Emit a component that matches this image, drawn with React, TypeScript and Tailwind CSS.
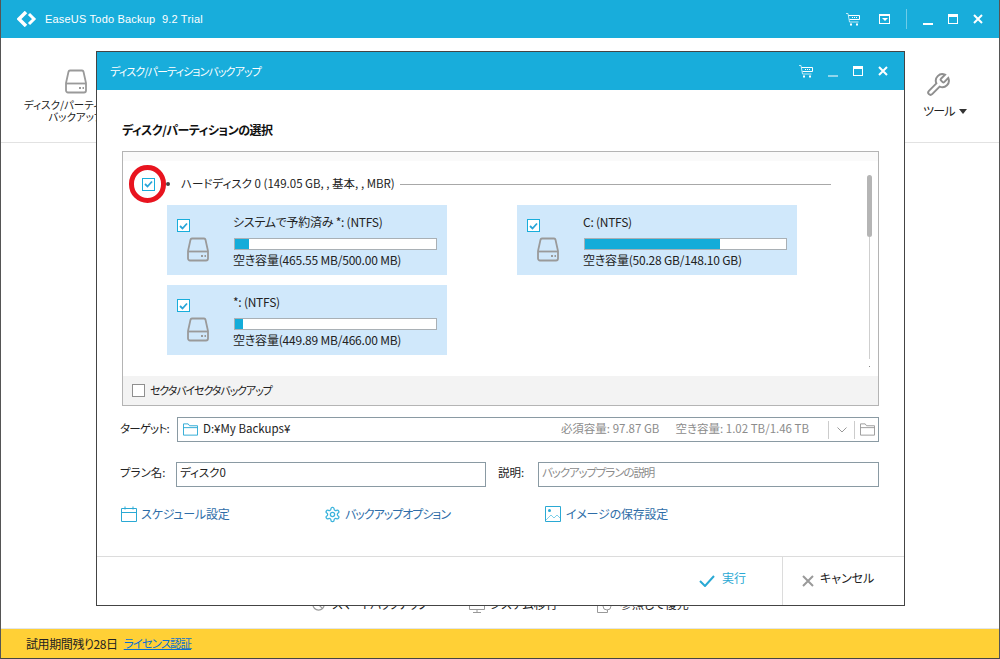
import React from "react"

const jp = "font-['Noto_Sans_CJK_JP','Noto_Sans',sans-serif] [font-feature-settings:'palt']"

function Drive({ className = "" }: { className?: string }) {
  return (
    <svg viewBox="0 0 22 25" fill="none" className={className}>
      <path d="M5 1.500h12a1.500 1.500 0 0 1 1.500 1.200L21 14v7.500a2 2 0 0 1-2 2H3a2 2 0 0 1-2-2V14L3.500 2.700A1.500 1.500 0 0 1 5 1.500z" stroke="#9a9a9a" strokeWidth="1.800" />
      <path d="M1 14.500h20" stroke="#9a9a9a" strokeWidth="1.800" />
      <path d="M14 19h2M17.500 19h1.500" stroke="#9a9a9a" strokeWidth="1.800" />
    </svg>
  )
}

function Cart() {
  return (
    <svg viewBox="0 0 14 13" fill="none" className="h-[13px] w-[14px]">
      <path d="M0 .5h2l1.500 8.500h9" stroke="#bfeaf6" strokeWidth="1" />
      <path d="M2.500 2.500h11v4h-10" stroke="#fff" strokeWidth="1" />
      <path d="M6 4.500h1M8 4.500h1M10 4.500h1" stroke="#fff" strokeWidth="1" />
      <path d="M4 10.500h2v2h-2zM10 10.500h2v2h-2z" fill="#fff" />
    </svg>
  )
}

function Minimize({ dim = false }: { dim?: boolean }) {
  return <div className={`mt-[10px] h-[2px] w-[10px] ${dim ? "bg-[#8fd6ec]" : "bg-white"}`} />
}

function Maximize() {
  return <div className="h-[10px] w-[10px] border border-t-[3px] border-white" />
}

function Close() {
  return (
    <svg viewBox="0 0 10 10" className="h-[10px] w-[10px]" fill="none">
      <path d="M1 1l8 8M9 1l-8 8" stroke="#fff" strokeWidth="2" />
    </svg>
  )
}

function Check({ className = "" }: { className?: string }) {
  return (
    <div className={`flex h-[13px] w-[13px] shrink-0 items-center justify-center border border-[#18addb] bg-white ${className}`}>
      <svg viewBox="0 0 9 8" className="h-[8px] w-[9px]" fill="none">
        <path d="M1 4l2.500 2.500L8 1.500" stroke="#2aa5d8" strokeWidth="1.800" />
      </svg>
    </div>
  )
}

function Partition({ name, free, pct }: { name: string; free: string; pct: number }) {
  return (
    <div className="flex h-[70px] w-[280px] bg-[#d0e8fb]">
      <div className="flex w-[67px] flex-col pl-[10px] pt-[14px]">
        <Check />
        <Drive className="ml-[10px] mt-[5px] h-[25px] w-[22px]" />
      </div>
      <div className="flex flex-col pt-[9px]">
        <div className="-ml-[1px] h-[16px] text-[12px] leading-[16px] tracking-[-0.25px] text-[#222]">{name}</div>
        <div className="mt-[8px] h-[12px] w-[203px] border border-[#a9b0b5] bg-white">
          <div className="h-full bg-[#14acd9]" style={{ width: `${pct}%` }} />
        </div>
        <div className="-ml-[1px] mt-[2px] h-[16px] whitespace-nowrap text-[12px] leading-[16px] tracking-[-0.2px] text-[#222]">{free}</div>
      </div>
    </div>
  )
}

export default function App() {
  return (
    <div className={`relative flex h-[659px] w-[1000px] flex-col overflow-hidden border-x border-b border-x-[#555] border-b-[#444] bg-white ${jp}`}>
      {/* main window */}
      <div className="flex h-[38px] shrink-0 items-center bg-[#18addb] pl-[16px] pr-[16px]">
        <svg viewBox="0 0 20 16" className="h-[16px] w-[20px]" fill="none">
          <path d="M9 1L2 8l7 7" stroke="#fff" strokeWidth="3.500" />
          <path d="M12 3l5 5-5 5" stroke="#fff" strokeWidth="3" />
        </svg>
        <span className="ml-[8px] font-['Liberation_Sans',sans-serif] text-[11px] tracking-[0.2px] text-white">EaseUS Todo Backup&nbsp; 9.2 Trial</span>
        <div className="ml-auto flex items-center">
          <Cart />
          <div className="ml-[19px] flex h-[10px] w-[11px] items-center justify-center border border-t-2 border-white">
            <div className="h-0 w-0 border-x-[3px] border-t-[3px] border-x-transparent border-t-white" />
          </div>
          <div className="ml-[16px] h-[20px] w-px bg-[#6fcce8]" />
          <div className="ml-[16px] flex items-center gap-[15px]">
            <Minimize />
            <Maximize />
            <Close />
          </div>
        </div>
      </div>

      <div className="flex h-[105px] shrink-0 items-start justify-between border-b border-[#e2e2e2]">
        <div className="flex w-[150px] flex-col items-center pt-[31px]">
          <Drive className="h-[25px] w-[22px]" />
          <div className="mt-[5px] whitespace-nowrap text-center text-[10.500px] leading-[12px] text-[#222]">ディスク/パーティション<br />バックアップ</div>
        </div>
        <div className="flex w-[90px] flex-col items-center pr-[18px] pt-[34px]">
          <svg viewBox="0 0 24 24" className="mr-[14px] h-[26px] w-[26px]" fill="none">
            <path d="M14.700 6.300a1 1 0 0 0 0 1.400l1.600 1.600a1 1 0 0 0 1.400 0l3.770-3.770a6 6 0 0 1-7.940 7.940l-6.910 6.910a2.120 2.120 0 0 1-3-3l6.910-6.910a6 6 0 0 1 7.940-7.940l-3.760 3.760z" stroke="#8f8f8f" strokeWidth="1.800" />
          </svg>
          <div className="mt-[4px] flex items-center gap-[4px] whitespace-nowrap text-[12px] tracking-[-0.8px] text-[#222]">
            ツール
            <div className="h-0 w-0 border-x-[4px] border-t-[5px] border-x-transparent border-t-[#333]" />
          </div>
        </div>
      </div>

      <div className="flex flex-1 items-end pb-[15px] pl-[311px] text-[12px] text-[#222]">
        <svg viewBox="0 0 16 16" className="h-[15px] w-[15px]" fill="none">
          <circle cx="7" cy="7" r="6" stroke="#999" strokeWidth="1.300" />
          <path d="M3 3l8 8" stroke="#999" strokeWidth="1.300" />
        </svg>
        <span className="ml-[5px] w-[137px] whitespace-nowrap tracking-[-1px]">スマートバックアップ</span>
        <svg viewBox="0 0 16 14" className="h-[14px] w-[16px]" fill="none">
          <path d="M.5.5h15v10H.5zM8 10.500v3M4 13.500h8" stroke="#999" strokeWidth="1" />
        </svg>
        <span className="ml-[5px] w-[107px]">システム移行</span>
        <svg viewBox="0 0 16 14" className="h-[14px] w-[16px]" fill="none">
          <path d="M.5.5h10v13H.5z" stroke="#999" strokeWidth="1" />
          <circle cx="10" cy="7" r="4" fill="#fff" stroke="#999" strokeWidth="1" />
        </svg>
        <span className="ml-[7px]">参照して復元</span>
      </div>

      <div className="flex h-[30px] shrink-0 items-center border-t border-[#e2e6ea] bg-[#ffd036] pl-[25px] text-[12px] text-[#222]">
        <span className="tracking-[-0.4px]">試用期間残り28日</span>
        <span className="ml-[6px] text-[11.500px] tracking-[-1px] text-[#0a6fd0] underline">ライセンス認証</span>
      </div>

      {/* dialog */}
      <div className="absolute left-[95px] top-[51px] flex h-[555px] w-[809px] flex-col border border-[#444] bg-white">
        <div className="flex h-[38px] shrink-0 items-center bg-[#18addb] pl-[13px] pr-[16px]">
          <span className="text-[11px] tracking-[-0.9px] text-white">ディスク/パーティションバックアップ</span>
          <div className="ml-auto flex items-center">
            <Cart />
            <div className="ml-[15px] flex items-center gap-[15px]">
              <Minimize dim />
              <Maximize />
              <Close />
            </div>
          </div>
        </div>

        <div className="flex flex-1 flex-col px-[25px]">
          <div className="mt-[30px] h-[20px] text-[12px] font-bold leading-[20px] tracking-[-0.5px] text-[#111]">ディスク/パーティションの選択</div>

          <div className="mt-[11px] flex h-[255px] w-[757px] flex-col border border-[#b4b4b4]">
            <div className="flex h-[9px] shrink-0 bg-[#fafafa]" />
            <div className="relative flex flex-1 flex-col">
              <div className="mt-[7px] flex h-[32px] items-center pl-[19px] pr-[47px]">
                <Check className="mr-[11px]" />
                <div className="mr-[11px] h-[4px] w-[4px] rounded-full bg-[#444]" />
                <span className="whitespace-nowrap text-[11.500px] text-[#222]">ハードディスク 0 (149.05 GB, , 基本, , MBR)</span>
                <div className="ml-[5px] h-px flex-1 bg-[#a8a8a8]" />
              </div>
              <div className="ml-[44px] mt-[5px] grid w-[630px] grid-cols-[280px_280px] gap-x-[70px] gap-y-[10px]">
                <Partition name="システムで予約済み *: (NTFS)" free="空き容量(465.55 MB/500.00 MB)" pct={7} />
                <Partition name="C: (NTFS)" free="空き容量(50.28 GB/148.10 GB)" pct={67} />
                <Partition name="*: (NTFS)" free="空き容量(449.89 MB/466.00 MB)" pct={4} />
              </div>
              <div className="absolute right-[6px] top-[14px] flex w-[5px] flex-col items-center">
                <div className="h-[62px] w-[5px] rounded-full bg-[#b5b5b5]" />
                <div className="h-[122px] w-px bg-[#cfcfcf]" />
                <div className="mt-[7px] h-px w-px bg-[#888]" />
              </div>
            </div>
            <div className="flex h-[29px] shrink-0 items-center gap-[5px] bg-[#f3f3f3] pl-[9px] text-[11px] tracking-[-1.1px] text-[#222]">
              <div className="h-[13px] w-[13px] border border-[#8f8f8f] bg-white" />
              セクタバイセクタバックアップ
            </div>
          </div>

          <div className="-ml-[2px] mt-[11px] flex h-[25px] items-center">
            <div className="w-[57px] whitespace-nowrap pb-[2px] text-[11.500px] tracking-[-0.8px] text-[#222]">ターゲット:</div>
            <div className="flex h-[25px] w-[702px] items-center border border-[#8a9aa3] pl-[5px] pr-[3px] text-[11.500px]">
              <svg viewBox="0 0 16 13" className="h-[13px] w-[15px]" fill="none">
                <path d="M.5 12.500v-12h5l1.500 2h8.500v10zM.5 4.500h15" stroke="#2aa9d4" strokeWidth="1" />
              </svg>
              <span className="mb-[2px] ml-[5px] text-[#222]">D:¥My Backups¥</span>
              <span className="mb-[2px] ml-auto text-[#8c8c8c]">必須容量: 97.87 GB</span>
              <span className="mb-[2px] ml-[16px] text-[#8c8c8c]">空き容量: 1.02 TB/1.46 TB</span>
              <div className="ml-[19px] h-[18px] w-px bg-[#ccc]" />
              <svg viewBox="0 0 10 6" className="ml-[8px] h-[6px] w-[10px]" fill="none">
                <path d="M.5.500L5 5l4.500-4.500" stroke="#999" strokeWidth="1" />
              </svg>
              <div className="ml-[7px] h-[18px] w-px bg-[#ccc]" />
              <svg viewBox="0 0 16 13" className="ml-[5px] h-[13px] w-[15px]" fill="none">
                <path d="M.5 12.500v-12h5l1.500 2h8.500v10zM.5 4.500h15" stroke="#999" strokeWidth="1" />
              </svg>
            </div>
          </div>

          <div className="-ml-[2px] mt-[20px] flex h-[25px] items-center">
            <div className="w-[56px] whitespace-nowrap pb-[3px] text-[11.500px] text-[#222]">プラン名:</div>
            <div className="flex h-[25px] w-[310px] items-center border border-[#8a9aa3] pb-[3px] pl-[3px] text-[11.500px] text-[#222]">ディスク0</div>
            <div className="ml-[12px] w-[40px] pb-[3px] text-[11.500px] text-[#222]">説明:</div>
            <div className="flex h-[25px] w-[341px] items-center border border-[#8a9aa3] pb-[3px] pl-[3px] text-[11.500px] tracking-[-1.1px] text-[#8c8c8c]">バックアッププランの説明</div>
          </div>

          <div className="-ml-[1px] mt-[19px] flex h-[16px] items-center text-[12px] text-[#2e6da8]">
            <div className="flex w-[204px] items-center gap-[4px]">
              <svg viewBox="0 0 16 16" className="h-[16px] w-[16px]" fill="none">
                <path d="M.5 2.500h15v13H.5zM.5 6.500h15M4 .5v3M12 .5v3" stroke="#2aa9d4" strokeWidth="1" />
              </svg>
              <span className="tracking-[-0.2px]">スケジュール設定</span>
            </div>
            <div className="-ml-[1px] flex w-[221px] items-center gap-[4px]">
              <svg viewBox="0 0 24 24" className="h-[17px] w-[17px]" fill="none" stroke="#3cb4dc" strokeWidth="1.800">
                <path d="M12.220 2h-.44a2 2 0 0 0-2 2v.18a2 2 0 0 1-1 1.730l-.43.250a2 2 0 0 1-2 0l-.15-.08a2 2 0 0 0-2.730.730l-.22.380a2 2 0 0 0 .730 2.730l.15.100a2 2 0 0 1 1 1.720v.510a2 2 0 0 1-1 1.740l-.15.090a2 2 0 0 0-.730 2.730l.22.380a2 2 0 0 0 2.730.730l.15-.08a2 2 0 0 1 2 0l.43.250a2 2 0 0 1 1 1.730V20a2 2 0 0 0 2 2h.44a2 2 0 0 0 2-2v-.18a2 2 0 0 1 1-1.730l.43-.250a2 2 0 0 1 2 0l.15.080a2 2 0 0 0 2.730-.730l.22-.390a2 2 0 0 0-.730-2.730l-.15-.080a2 2 0 0 1-1-1.740v-.500a2 2 0 0 1 1-1.740l.15-.090a2 2 0 0 0 .730-2.730l-.22-.380a2 2 0 0 0-2.730-.730l-.15.080a2 2 0 0 1-2 0l-.43-.250a2 2 0 0 1-1-1.730V4a2 2 0 0 0-2-2z" />
                <circle cx="12" cy="12" r="3" />
              </svg>
              <span className="tracking-[-1px]">バックアップオプション</span>
            </div>
            <div className="flex items-center gap-[5px]">
              <svg viewBox="0 0 16 16" className="h-[16px] w-[16px]" fill="none">
                <path d="M.5.5h15v15H.5z" stroke="#2aa9d4" strokeWidth="1" />
                <path d="M1 14l5-5 3 3 3-3 3 3" stroke="#7fd0ea" strokeWidth="1" />
                <circle cx="4.500" cy="4.500" r="1.500" fill="#2aa9d4" />
              </svg>
              <span className="tracking-[-0.2px]">イメージの保存設定</span>
            </div>
          </div>
        </div>

        <div className="flex h-[49px] shrink-0 items-center justify-end border-t border-[#dcdcdc]">
          <div className="mr-[36px] flex items-center gap-[7px] text-[12px] text-[#2aa9d4]">
            <svg viewBox="0 0 16 12" className="h-[12px] w-[16px]" fill="none">
              <path d="M1 6l5 5 9-10" stroke="#2aa9d4" strokeWidth="2" />
            </svg>
            <span className="mb-[6px]">実行</span>
          </div>
          <div className="flex h-full w-[122px] items-center gap-[6px] border-l border-[#dcdcdc] pl-[19px] text-[12px] text-[#222]">
            <svg viewBox="0 0 12 12" className="h-[12px] w-[12px]" fill="none">
              <path d="M1 1l10 10M11 1L1 11" stroke="#9a9a9a" strokeWidth="2" />
            </svg>
            <span className="mb-[6px]">キャンセル</span>
          </div>
        </div>
      </div>

      {/* annotation ring */}
      <div className="absolute left-[128px] top-[165px] h-[38px] w-[37px] rounded-full border-[5px] border-[#e8141f]" />
    </div>
  )
}
